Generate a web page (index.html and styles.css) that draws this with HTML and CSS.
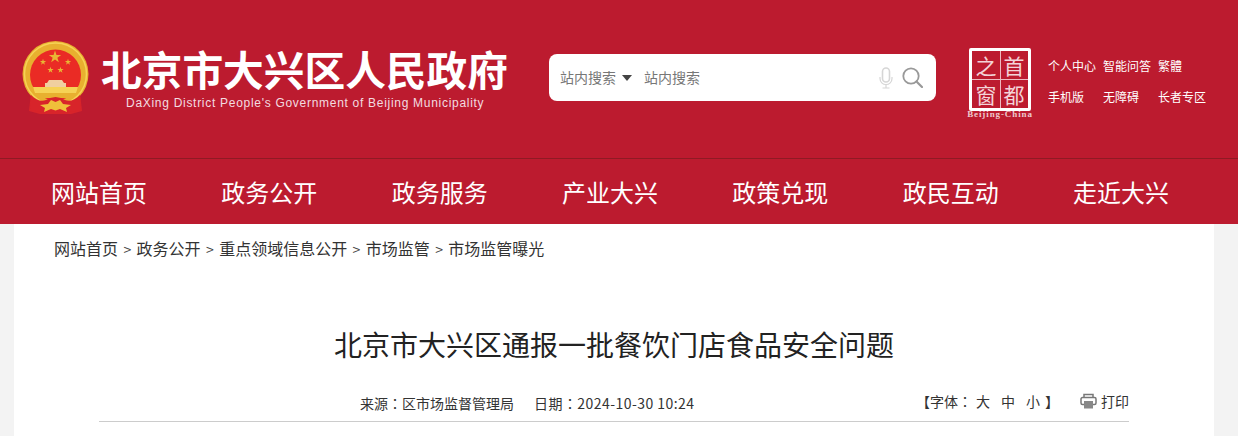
FILE: index.html
```html
<!DOCTYPE html>
<html lang="zh-CN">
<head>
<meta charset="utf-8">
<title>北京市大兴区通报一批餐饮门店食品安全问题</title>
<link rel="stylesheet" href="styles.css">
</head>
<body>
<header class="top">
  <div class="brand">
    <svg class="emblem" viewBox="0 0 67 74" width="67" height="74" aria-hidden="true">
      <defs>
        <path id="star" d="M0-1 .225-.309H.951L.363.118.588.809 0 .382-.588.809-.363.118-.951-.309H-.225Z"/>
      </defs>
      <path d="M9 52 L7 70 L18 73 H49 L60 70 L58 52 Z" fill="#d8242a"/>
      <circle cx="33.500" cy="33" r="33" fill="#e8b02f"/>
      <circle cx="33.500" cy="33" r="31" fill="none" stroke="#f6d356" stroke-width="1.500"/>
      <circle cx="33.500" cy="34" r="25.500" fill="#ea2b25"/>
      <g fill="#e9b534">
        <use href="#star" transform="translate(33 16) scale(6.500)"/>
        <use href="#star" transform="translate(21 21) scale(3.300)"/>
        <use href="#star" transform="translate(46 21) scale(3.300)"/>
        <use href="#star" transform="translate(28.500 29) scale(3.300)"/>
        <use href="#star" transform="translate(38.500 29) scale(3.300)"/>
      </g>
      <path d="M27 39h13l2 3h2v4H23v-4h2z" fill="#f0cfa0"/>
      <path d="M11 46h45l-2 6H13z" fill="#f6d255"/>
      <path d="M12 52h43l-5 5H17z" fill="#e8b02f"/>
      <path d="M9 54c5 5 10 7 15 5l4-2 5.500-1 5.500 1 4 2c5 2 10 0 15-5l1 15-11 2-9-6-5.500 1-5.500-1-9 6-11-2z" fill="#d8242a"/>
      <path d="M18 64l8-1 3-4 4.500 2 4.500-2 3 4 8 1-5 3 1 4-7-3-4.500 1.500L29 68l-7 3 1-4z" fill="#f0bf3a"/>
    </svg>
    <div class="names">
      <div class="site-cn">北京市大兴区人民政府</div>
      <div class="site-en">DaXing District People's Government of Beijing Municipality</div>
    </div>
  </div>
  <div class="search">
    <span class="scope">站内搜索</span>
    <span class="caret"></span>
    <span class="hint">站内搜索</span>
    <svg class="mic" viewBox="0 0 14 22" width="14" height="22" aria-hidden="true">
      <rect x="3.500" y="1" width="7" height="14" rx="3.500" fill="none" stroke="#d6d6d6" stroke-width="1.600"/>
      <path d="M1 10v1.500c0 3.500 2.700 6 6 6s6-2.500 6-6V10M7 17.500V21M3.500 21h7" fill="none" stroke="#d6d6d6" stroke-width="1.200"/>
    </svg>
    <svg class="glass" viewBox="0 0 21 21" width="21" height="21" aria-hidden="true">
      <circle cx="9" cy="9" r="7.700" fill="none" stroke="#999" stroke-width="1.800"/>
      <path d="M14.500 14.500L20 20" stroke="#999" stroke-width="2.200" stroke-linecap="round"/>
    </svg>
  </div>
  <div class="seal">
    <div class="seal-box">
      <span class="seal-cell">之</span>
      <span class="seal-cell">首</span>
      <span class="seal-cell">窗</span>
      <span class="seal-cell">都</span>
    </div>
    <div class="seal-en">Beijing-China</div>
  </div>
  <div class="quick">
    <a class="quick-link">个人中心</a><a class="quick-link">智能问答</a><a class="quick-link">繁體</a>
    <a class="quick-link">手机版</a><a class="quick-link">无障碍</a><a class="quick-link">长者专区</a>
  </div>
</header>
<nav class="nav">
  <a class="nav-item">网站首页</a>
  <a class="nav-item">政务公开</a>
  <a class="nav-item">政务服务</a>
  <a class="nav-item">产业大兴</a>
  <a class="nav-item">政策兑现</a>
  <a class="nav-item">政民互动</a>
  <a class="nav-item">走近大兴</a>
</nav>
<main class="page">
  <div class="crumbs">
    <a>网站首页</a><i>&gt;</i><a>政务公开</a><i>&gt;</i><a>重点领域信息公开</a><i>&gt;</i><a>市场监管</a><i>&gt;</i><a>市场监管曝光</a>
  </div>
  <h1 class="title">北京市大兴区通报一批餐饮门店食品安全问题</h1>
  <div class="meta">
    <span class="source">来源<span class="colon" lang="zh-TW">：</span>区市场监督管理局</span>
    <span class="date">日期<span class="colon" lang="zh-TW">：</span>2024-10-30 10:24</span>
    <span class="sizes"><b>【</b>字体<span class="colon" lang="zh-TW">：</span><em>大</em><em>中</em><em>小</em><b class="close">】</b></span>
    <span class="print">
      <svg viewBox="0 0 17 16" width="17" height="16" aria-hidden="true">
        <path d="M4 4V1.500h9V4" fill="none" stroke="#777" stroke-width="1.500"/>
        <path d="M4 11.500H2.500A1.500 1.500 0 0 1 1 10V6a1.500 1.500 0 0 1 1.500-1.500h12A1.500 1.500 0 0 1 16 6v4a1.500 1.500 0 0 1-1.500 1.500H13" fill="none" stroke="#777" stroke-width="1.500"/>
        <rect x="4" y="8" width="9" height="7.500" fill="#888"/>
      </svg>
      打印
    </span>
  </div>
</main>
</body>
</html>
```
FILE: styles.css
```css
html, body {
  margin: 0;
  padding: 0;
  height: 436px;
  overflow: hidden;
}
body {
  background: #f3f3f3;
  font-family: "Microsoft YaHei", "Noto Sans CJK SC", "Liberation Sans", sans-serif;
  color: #333;
}
a { color: inherit; text-decoration: none; }

.top {
  height: 159px;
  box-sizing: border-box;
  background: #bc1b2f;
  border-bottom: 1px solid #8f1a24;
  display: flex;
  align-items: flex-start;
  padding: 41px 0 0 22px;
  color: #fff;
}
.brand { display: flex; width: 527px; }
.emblem { flex: none; }
.names { margin-left: 12px; }
.site-cn {
  font-size: 40.700px;
  font-weight: 700;
  line-height: 56px;
  white-space: nowrap;
  color: #fff;
}
.site-en {
  margin: -1px 0 0 25px;
  font-family: "Liberation Sans", sans-serif;
  font-size: 12px;
  line-height: 14px;
  letter-spacing: 0.710px;
  color: #f3dce0;
  white-space: nowrap;
}

.search {
  width: 387px;
  height: 47px;
  margin-top: 13px;
  box-sizing: border-box;
  background: #fff;
  border-radius: 8px;
  display: flex;
  align-items: center;
  padding-left: 11px;
  font-size: 14px;
  color: #777;
}
.scope { width: 62px; margin-top: -2px; }
.caret {
  width: 0;
  height: 0;
  border-left: 5px solid transparent;
  border-right: 5px solid transparent;
  border-top: 6px solid #444;
  margin-right: 12px;
}
.hint { width: 235px; margin-top: -2px; }
.mic { flex: none; }
.glass { flex: none; margin-left: 9px; }

.seal { width: 79px; margin: 7px 0 0 33px; }
.seal-box {
  width: 62px;
  height: 63px;
  box-sizing: border-box;
  border: 3px solid #fff;
  border-radius: 2px;
  display: grid;
  grid-template-columns: 1fr 1fr;
  grid-template-rows: 1fr 1fr;
  background:
    linear-gradient(#eeb9c0, #eeb9c0) center / 1px 100% no-repeat,
    linear-gradient(#eeb9c0, #eeb9c0) center / 100% 1px no-repeat;
}
.seal-cell {
  font-size: 21px;
  line-height: 28px;
  text-align: center;
  color: #f3d3d8;
}
.seal-en {
  width: 70px;
  margin: -2px 0 0 -4px;
  font-family: "Liberation Serif", serif;
  font-size: 9px;
  font-weight: 700;
  line-height: 11px;
  letter-spacing: 0.900px;
  text-align: center;
  color: #eec9ce;
  white-space: nowrap;
}

.quick {
  display: grid;
  grid-template-columns: 55px 55px 60px;
  grid-auto-rows: 31px;
  margin: 16px 0 0 0;
  font-size: 12px;
  line-height: 18px;
  color: #fff;
}
.quick-link { white-space: nowrap; }

.nav {
  height: 65px;
  background: #bc1b2f;
  display: flex;
  justify-content: space-between;
  align-items: center;
  padding: 0 69px 0 51px;
}
.nav-item {
  font-size: 24px;
  line-height: 36px;
  color: #fff;
  white-space: nowrap;
}

.page {
  margin-left: 14px;
  width: 1200px;
  height: 212px;
  box-sizing: border-box;
  background: #fff;
  padding: 13px 85px 0;
}
.crumbs {
  margin-left: -45px;
  font-size: 16px;
  line-height: 24px;
  color: #333;
  white-space: nowrap;
  margin-top: -1px;
}
.crumbs i {
  font-style: normal;
  font-size: 14px;
  margin: 0 5.400px;
  color: #444;
}
.title {
  margin: 63px 0 0;
  font-size: 28px;
  font-weight: 400;
  line-height: 40px;
  color: #222;
  text-align: center;
  white-space: nowrap;
}
.meta {
  margin-top: 27px;
  height: 31px;
  box-sizing: border-box;
  border-bottom: 1px solid #ccc;
  display: flex;
  align-items: flex-start;
  font-size: 14px;
  line-height: 24px;
  color: #333;
  padding-left: 261px;
}
.colon { font-family: "Noto Sans CJK TC", "Noto Sans CJK SC", sans-serif; }
.source { width: 174px; }
.date { width: 382px; letter-spacing: 0.450px; }
.sizes { width: 164px; white-space: nowrap; margin-top: -2px; }
.sizes b { font-weight: 400; }
.sizes em { font-style: normal; margin-left: 11px; }
.sizes em:first-of-type { margin-left: 4px; }
.sizes .close { margin-left: 5px; }
.print { display: flex; align-items: center; gap: 4px; margin-top: -2px; }
```
